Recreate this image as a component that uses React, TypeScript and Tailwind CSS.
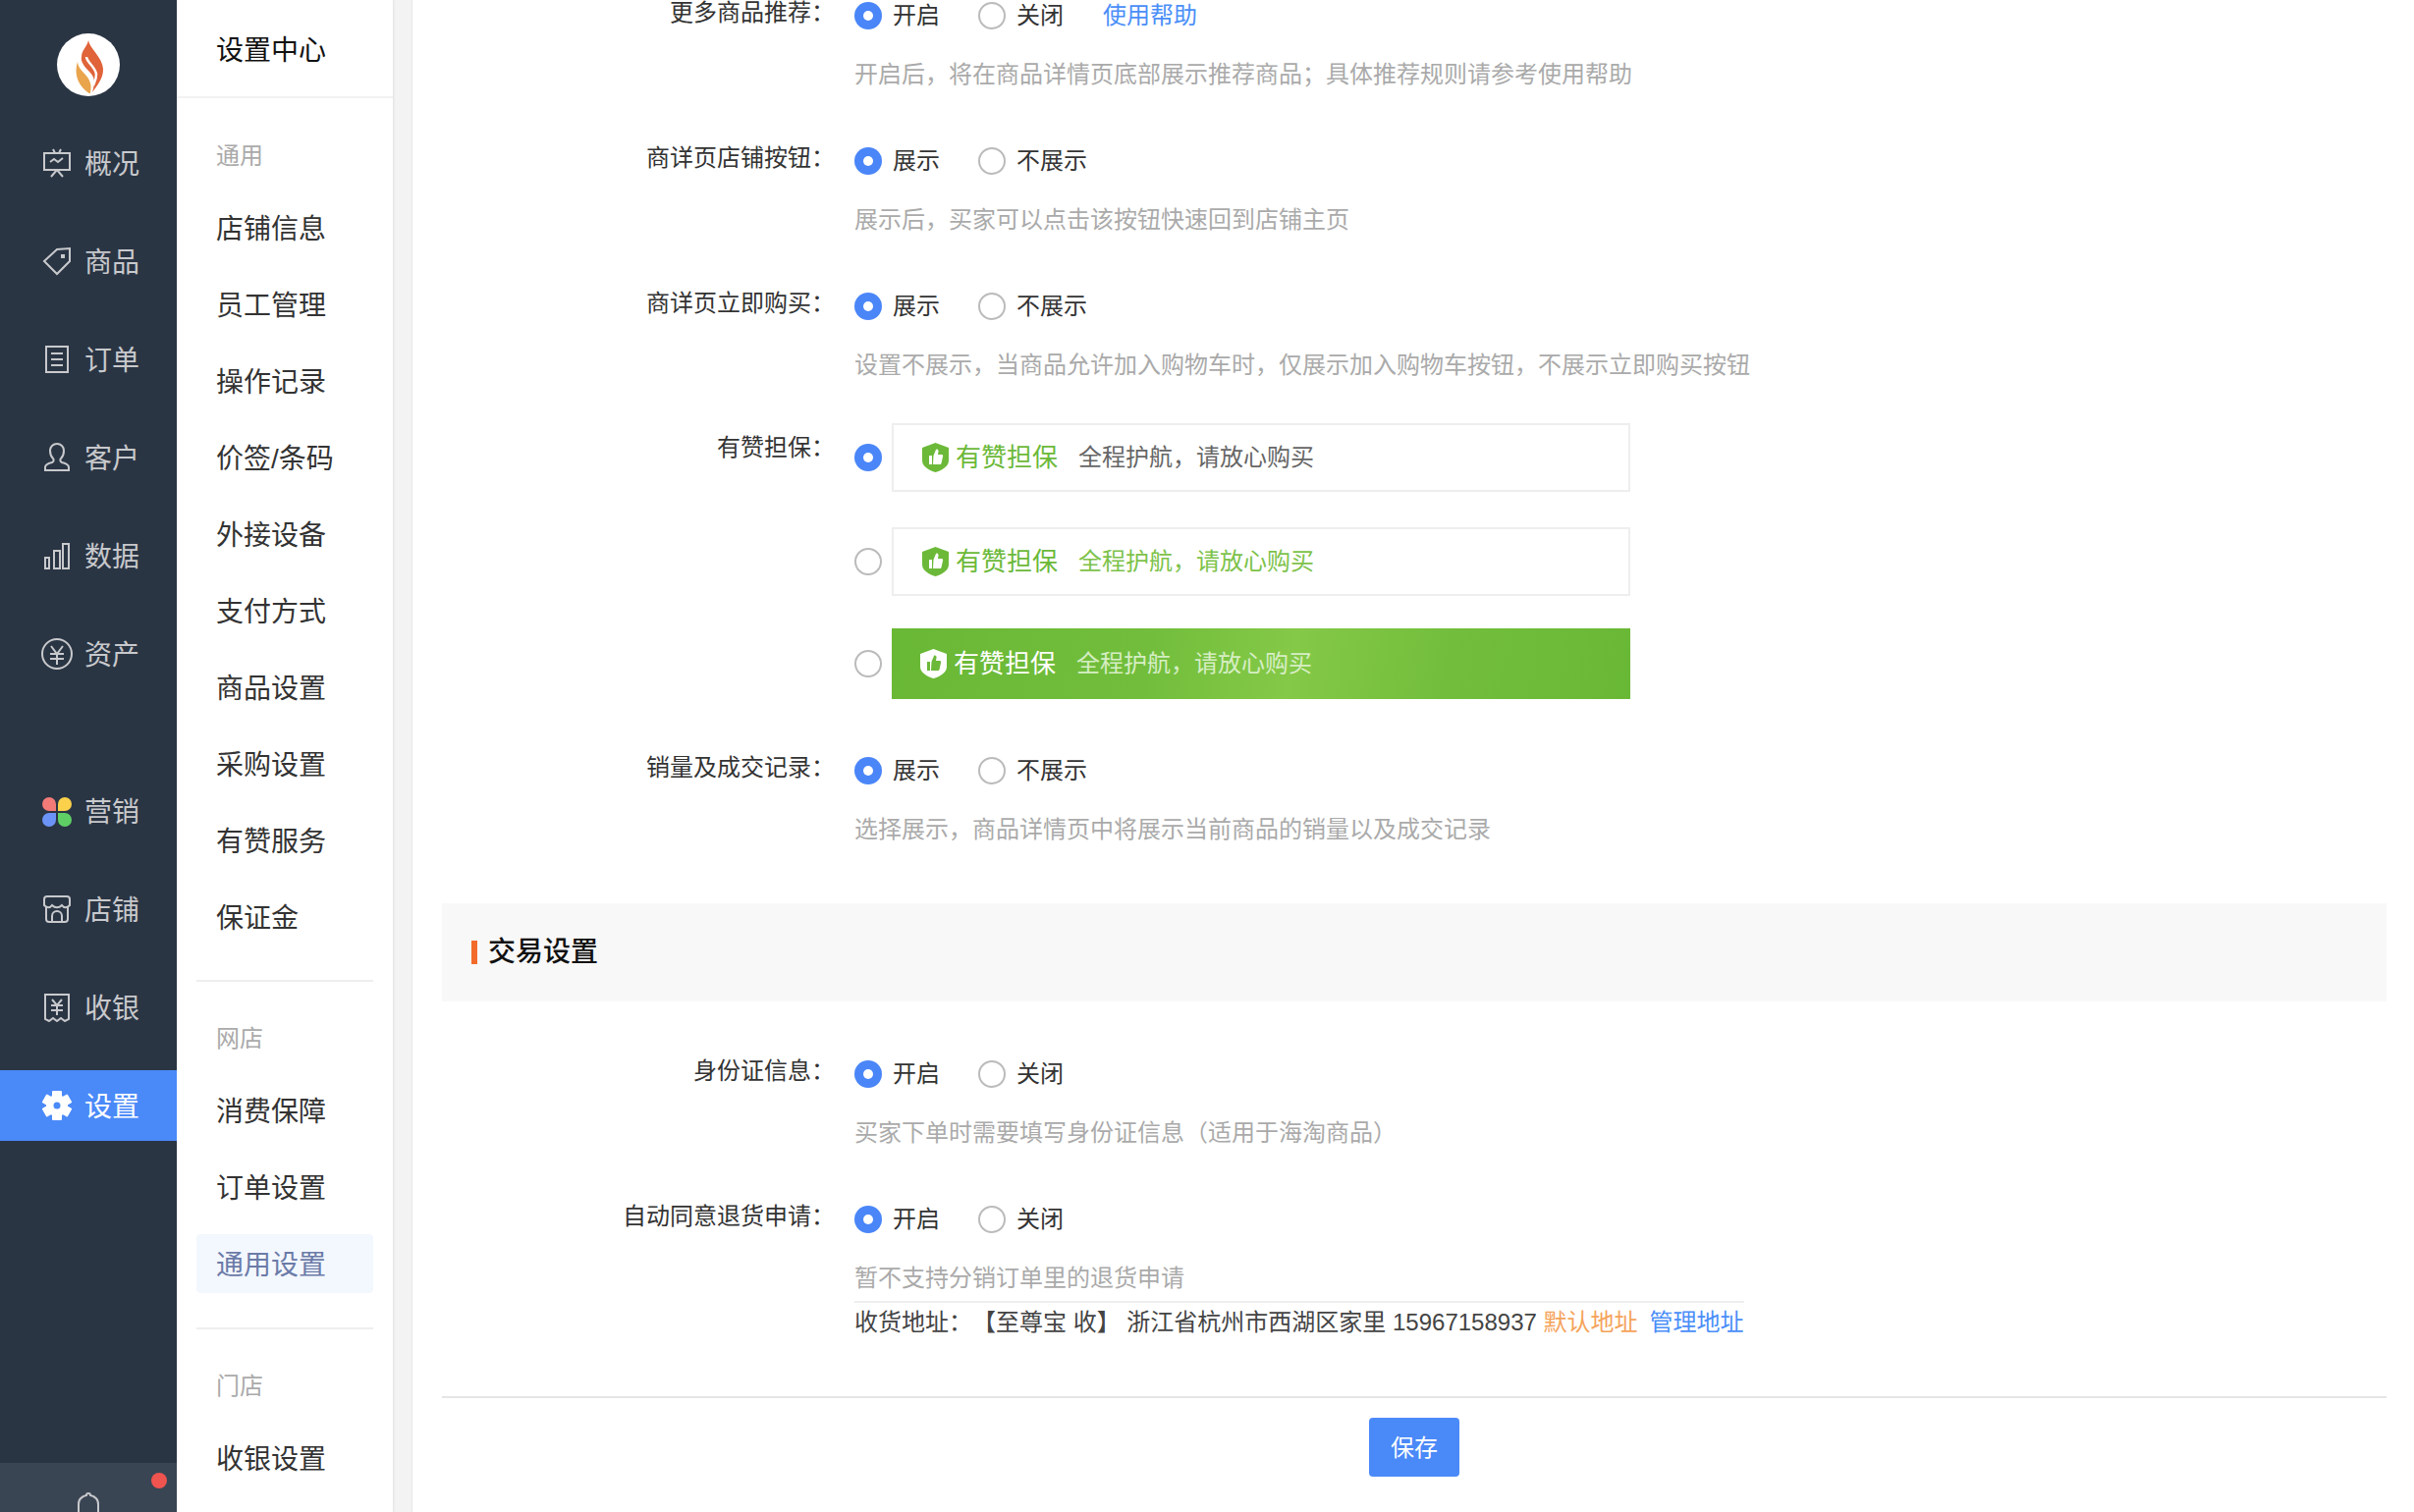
import React from "react";

const S = { fill: "none", stroke: "#c8c9cc", strokeWidth: 2 };

const IconOverview = () => (
  <svg width="30" height="30" viewBox="0 0 30 30" {...S}>
    <path d="M2 5h26v17H2z" />
    <path d="M11 1l2 4M19 1l-2 4M8 14l4-3 4 3 5-4" />
    <path d="M15 22l-6 7M15 22l6 7" />
  </svg>
);
const IconTag = () => (
  <svg width="30" height="30" viewBox="0 0 30 30" {...S}>
    <path d="M2 15L15 3l13-1v13L15 28z" />
    <path d="M19 8h4v4h-4z" fill="#c8c9cc" stroke="none" />
  </svg>
);
const IconOrder = () => (
  <svg width="26" height="30" viewBox="0 0 26 30" {...S}>
    <path d="M2 2h22v26H2z" />
    <path d="M7 9h12M7 15h12M7 21h12" />
  </svg>
);
const IconCustomer = () => (
  <svg width="28" height="30" viewBox="0 0 28 30" {...S}>
    <path d="M2 28v-3c0-3 3-4 7-5 2-1 2-3 1-4-2-2-3-5-3-8 0-4 3-7 7-7s7 3 7 7c0 3-1 6-3 8-1 1-1 3 1 4 4 1 7 2 7 5v3z" />
  </svg>
);
const IconData = () => (
  <svg width="28" height="28" viewBox="0 0 28 28" {...S}>
    <path d="M2 16h4v11H2zM11 9h6v18h-6zM20 2h6v25h-6z" />
  </svg>
);
const IconAsset = () => (
  <svg width="32" height="32" viewBox="0 0 32 32" {...S}>
    <circle cx="16" cy="16" r="15" />
    <path d="M10 8l6 8 6-8M9 16h14M9 21h14M16 16v11" />
  </svg>
);
const IconMarketing = () => (
  <svg width="30" height="30" viewBox="0 0 30 30" className="mt-[2px]">
    <path d="M14 14H7A7 7 0 1 1 14 7Z" fill="#f27b78" />
    <path d="M16 14V7A7 7 0 1 1 23 14Z" fill="#fbd14b" />
    <path d="M14 16V23A7 7 0 1 1 7 16Z" fill="#6c94f8" />
    <path d="M16 16H23A7 7 0 1 1 16 23Z" fill="#5fcf65" />
  </svg>
);
const IconStore = () => (
  <svg width="30" height="30" viewBox="0 0 30 30" {...S}>
    <path d="M5 2h20c2 0 3 1 3 3v6c-3 3-6 3-8 0-3 3-7 3-10 0-2 3-5 3-8 0V5c0-2 1-3 3-3z" />
    <path d="M4 13v12c0 2 1 3 3 3h16c2 0 3-1 3-3V13" />
    <path d="M10 28v-6a5 5 0 0 1 10 0v6" />
  </svg>
);
const IconCashier = () => (
  <svg width="28" height="30" viewBox="0 0 28 30" {...S}>
    <path d="M2 2h24v25l-4 2-4-3-4 3-4-3-4 3-4-2z" />
    <path d="M9 7l5 6 5-6M8 13h12M8 18h12M14 13v10" />
  </svg>
);
const IconGear = () => (
  <svg width="32" height="32" viewBox="0 0 32 32">
    <circle cx="16" cy="16" r="11" fill="#ffffff" />
    <rect x="11" y="1" width="10" height="30" rx="1" fill="#ffffff" />
    <rect x="11" y="1" width="10" height="30" rx="1" fill="#ffffff" transform="rotate(60 16 16)" />
    <rect x="11" y="1" width="10" height="30" rx="1" fill="#ffffff" transform="rotate(120 16 16)" />
    <circle cx="16" cy="16" r="3.500" fill="#4a89f8" />
  </svg>
);
const Flame = () => (
  <svg width="64" height="64" viewBox="0 0 64 64">
    <circle cx="32" cy="32" r="32" fill="#fff" />
    <path d="M21 29C18 38 19 50 30 59c2 2 5 3 4 1 2-8-1-14-6-19-4-4-7-8-7-12z" fill="#e9a44c" />
    <path d="M32 7c1 8 14 17 15 29 .5 10-7 18-11 24 3-10 3-15-3-21-6-6-9-11-8-15 0-7 6-11 7-17z" fill="#e0633a" />
    <path d="M30 24c0 5 10 11 10 18 0 5-2 8-3 11" fill="none" stroke="#fff" strokeWidth="2.500" />
  </svg>
);
const Shield = ({ fill, thumb }: { fill: string; thumb: string }) => (
  <svg width="27" height="30" viewBox="0 0 27 30">
    <path d="M13.500 0L27 5v13c0 6-7 10-13.500 12C7 28 0 24 0 18V5z" fill={fill} />
    <path d="M7 13h3v9H7zM11.500 13L14 7c1-1 3 0 2.500 2L16 12h4c1 0 1.500 1 1 2l-1.500 7c-.5 1-1 1-1.500 1h-7z" fill={thumb} />
  </svg>
);

const navTop = [
  ["概况", <IconOverview />],
  ["商品", <IconTag />],
  ["订单", <IconOrder />],
  ["客户", <IconCustomer />],
  ["数据", <IconData />],
  ["资产", <IconAsset />],
] as const;
const navBottom = [
  ["营销", <IconMarketing />],
  ["店铺", <IconStore />],
  ["收银", <IconCashier />],
] as const;

function NavItem({ label, icon, active }: { label: string; icon: React.ReactNode; active?: boolean }) {
  return (
    <div className={`flex h-[72px] items-center mb-[28px] pl-[40px] ${active ? "bg-[#4a89f8] text-white" : "text-[#c8c9cc]"}`}>
      <span className="flex w-[36px] justify-center">{icon}</span>
      <span className="ml-[10px] pt-[3px] text-[28px] leading-[36px]">{label}</span>
    </div>
  );
}

function Group({ title, items, active, gap }: { title: string; items: string[]; active?: string; gap: string }) {
  return (
    <div>
      <div className="pt-[39px] pl-[40px]">
        <div className="h-[36px] text-[24px] leading-[38px] text-[#aaaaaa]">{title}</div>
      </div>
      <div className="mt-[17px]">
        {items.map((t) => (
          <div key={t} className="h-[78px] py-[9px] mx-[20px]">
            <div className={`h-[60px] rounded-[4px] pl-[20px] text-[28px] leading-[64px] ${t === active ? "bg-[#f3f7fe] text-[#6b7ba8]" : "text-[#333333]"}`}>{t}</div>
          </div>
        ))}
      </div>
      <div className={`mx-[20px] h-[2px] bg-[#eeeeee] ${gap}`} />
    </div>
  );
}

function Radio({ on }: { on?: boolean }) {
  return on ? (
    <span className="flex h-[28px] w-[28px] shrink-0 items-center justify-center rounded-full bg-[#4a86f8]">
      <span className="h-[10px] w-[10px] rounded-full bg-white" />
    </span>
  ) : (
    <span className="block h-[28px] w-[28px] shrink-0 rounded-full border-2 border-[#bbbbbb] bg-white" />
  );
}

function Options({ a, b, help }: { a: string; b: string; help?: boolean }) {
  return (
    <div className="flex h-[32px] items-center text-[24px] text-[#333333]">
      <Radio on />
      <span className="ml-[11px] w-[48px] leading-[30px]">{a}</span>
      <span className="ml-[39px]">
        <Radio />
      </span>
      <span className="ml-[11px] leading-[30px]">{b}</span>
      {help && <span className="ml-[40px] leading-[28px] text-[#4a8ef8]">使用帮助</span>}
    </div>
  );
}

function Label({ children }: { children: string }) {
  return <div className="w-[400px] shrink-0 text-right text-[24px] leading-[25px] text-[#333333]">{children}：</div>;
}

function Row({ label, a, b, hint, help, className }: { label: string; a: string; b: string; hint: string; help?: boolean; className?: string }) {
  return (
    <div className={`flex ${className ?? ""}`}>
      <Label>{label}</Label>
      <div className="ml-[20px]">
        <Options a={a} b={b} help={help} />
        <div className="mt-[27px] text-[24px] leading-[34px] text-[#aaaaaa]">{hint}</div>
      </div>
    </div>
  );
}

function Card({ on, kind, className }: { on?: boolean; kind: 0 | 1 | 2; className?: string }) {
  const green = kind === 2;
  return (
    <div className={`flex items-center ${className ?? ""}`}>
      <Radio on={on} />
      <div
        className={`ml-[10px] flex w-[752px] items-center ${
          green
            ? "h-[72px] bg-[linear-gradient(100deg,#69b835_0%,#72be3c_35%,#84c947_54%,#72be3c_75%,#69b835_100%)] pl-[29px]"
            : "h-[70px] border-2 border-[#eeeeee] bg-white pl-[29px]"
        }`}
      >
        <Shield fill={green ? "#ffffff" : "#6cb939"} thumb={green ? "#6cb939" : "#ffffff"} />
        <span className={`ml-[7px] text-[26px] leading-[34px] ${green ? "text-white" : "text-[#6cb939]"}`}>有赞担保</span>
        <span
          className={`ml-[21px] text-[24px] leading-[30px] ${
            kind === 0 ? "text-[#666666]" : kind === 1 ? "text-[#7dc24a]" : "text-[#d6eec4]"
          }`}
        >
          全程护航，请放心购买
        </span>
      </div>
    </div>
  );
}

export default function App() {
  return (
    <div className="flex h-[1540px] w-[2458px] overflow-hidden bg-white font-['Liberation_Sans','Noto_Sans_CJK_SC',sans-serif]">
      <aside className="flex h-full w-[180px] shrink-0 flex-col bg-[#2a3544]">
        <div className="flex h-[130px] shrink-0 justify-center pt-[34px]">
          <div className="h-[64px]">
            <Flame />
          </div>
        </div>
        {navTop.map(([l, i]) => (
          <NavItem key={l} label={l} icon={i} />
        ))}
        <div className="h-[60px] shrink-0" />
        {navBottom.map(([l, i]) => (
          <NavItem key={l} label={l} icon={i} />
        ))}
        <NavItem label="设置" icon={<IconGear />} active />
        <div className="relative mt-auto flex h-[50px] shrink-0 justify-center overflow-hidden bg-[#3a4554] pt-[30px]">
          <span className="absolute right-[10px] top-[10px] h-[16px] w-[16px] rounded-full bg-[#f0544f]" />
          <svg width="24" height="24" viewBox="0 0 24 24" fill="none" stroke="#c8c9cc" strokeWidth="2" className="shrink-0">
            <path d="M2 24V12C2 7 6 4 10 3c0-1 1-2 2-2s2 1 2 2c4 1 8 4 8 9v12" />
          </svg>
        </div>
      </aside>

      <nav className="z-10 h-full w-[220px] shrink-0 bg-white shadow-[1px_0_2px_rgba(0,0,0,0.08)]">
        <div className="flex h-[100px] items-center border-b-2 border-[#f2f2f2] pl-[40px] pt-[6px] text-[28px] leading-[36px] text-[#111111]">设置中心</div>
        <div className="pt-[1px]">
          <Group title="通用" items={["店铺信息", "员工管理", "操作记录", "价签/条码", "外接设备", "支付方式", "商品设置", "采购设置", "有赞服务", "保证金"]} gap="mt-[25px]" />
          <Group title="网店" items={["消费保障", "订单设置", "通用设置"]} active="通用设置" gap="mt-[26px]" />
          <Group title="门店" items={["收银设置"]} gap="mt-[25px]" />
        </div>
      </nav>

      <div className="h-full w-[20px] shrink-0 border-r border-[#e8e8e8] bg-[#f3f3f3]" />

      <main className="h-full min-w-0 flex-1 overflow-hidden pl-[30px] pr-[28px]">
        <Row label="更多商品推荐" a="开启" b="关闭" help hint="开启后，将在商品详情页底部展示推荐商品；具体推荐规则请参考使用帮助" />
        <Row className="mt-[55px]" label="商详页店铺按钮" a="展示" b="不展示" hint="展示后，买家可以点击该按钮快速回到店铺主页" />
        <Row className="mt-[55px]" label="商详页立即购买" a="展示" b="不展示" hint="设置不展示，当商品允许加入购物车时，仅展示加入购物车按钮，不展示立即购买按钮" />

        <div className="mt-[42px] flex">
          <div className="pt-[12px]">
            <Label>有赞担保</Label>
          </div>
          <div className="ml-[20px]">
            <Card on kind={0} />
            <Card kind={1} className="mt-[36px]" />
            <Card kind={2} className="mt-[33px]" />
          </div>
        </div>

        <Row className="mt-[57px]" label="销量及成交记录" a="展示" b="不展示" hint="选择展示，商品详情页中将展示当前商品的销量以及成交记录" />

        <div className="mt-[58px] flex h-[100px] items-center bg-[#f8f8f8] pl-[30px]">
          <span className="h-[24px] w-[6px] bg-[#f26b2a]" />
          <span className="ml-[11px] text-[28px] font-medium leading-[36px] text-[#111111]">交易设置</span>
        </div>

        <Row className="mt-[58px]" label="身份证信息" a="开启" b="关闭" hint="买家下单时需要填写身份证信息（适用于海淘商品）" />

        <div className="mt-[55px] flex">
          <Label>自动同意退货申请</Label>
          <div className="ml-[20px] w-[906px]">
            <Options a="开启" b="关闭" />
            <div className="mt-[27px] text-[24px] leading-[34px] text-[#aaaaaa]">暂不支持分销订单里的退货申请</div>
            <div className="mt-[6px] h-[2px] bg-[#eeeeee]" />
            <div className="whitespace-nowrap text-[24px] leading-[40px] text-[#444444] [text-spacing-trim:space-all]">
              收货地址：【至尊宝 收】 浙江省杭州市西湖区家里 15967158937 <span className="text-[#f5a35a]">默认地址</span>
              <span className="ml-[12px] text-[#4a8ef8]">管理地址</span>
            </div>
          </div>
        </div>

        <div className="mt-[55px] h-[2px] bg-[#e5e5e5]" />
        <div className="mt-[20px] flex justify-center">
          <button className="h-[60px] w-[92px] rounded-[4px] bg-[#4a89f8] pt-[2px] text-[24px] text-white">保存</button>
        </div>
      </main>
    </div>
  );
}
